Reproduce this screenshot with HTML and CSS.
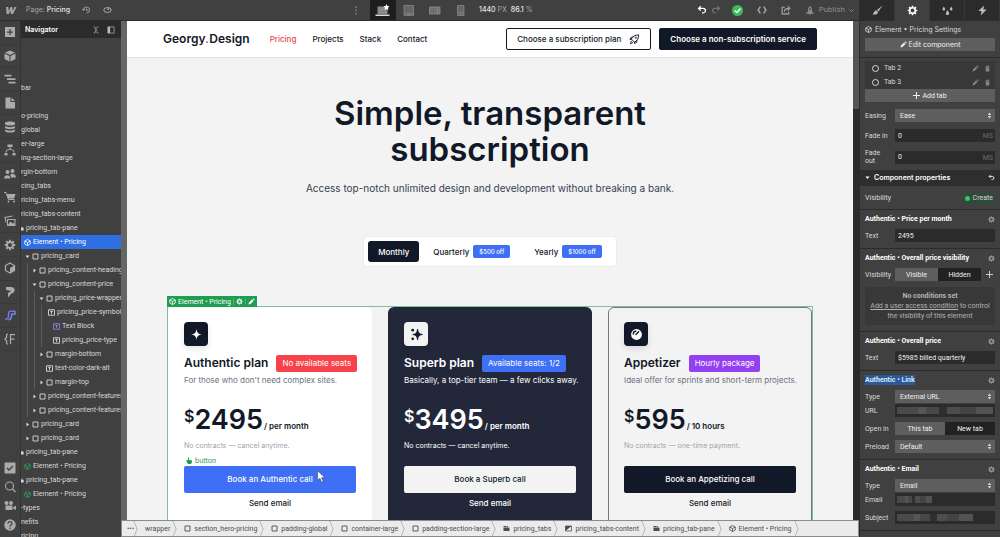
FILE: index.html
```html
<!DOCTYPE html>
<html lang="en">
<head>
    <meta charset="UTF-8">
    <meta name="viewport" content="width=device-width, initial-scale=1.0">
    <title>Page: Pricing</title>
    <link rel="stylesheet" href="styles.css">
</head>
<body>

<!-- Shared icons -->
<svg class="sprite" aria-hidden="true">
    <symbol id="i-box" viewBox="0 0 14 14"><path d="M2 2h10v10H2z" fill="none" stroke="currentColor" stroke-width="1.8"/></symbol>
    <symbol id="i-text" viewBox="0 0 14 14"><path d="M1 1.5h12v11H1zM4 4.5h6M7 4.5v6" fill="none" stroke="currentColor" stroke-width="1.8"/></symbol>
    <symbol id="i-cube" viewBox="0 0 14 14"><path d="M7 1l5.500 3v6L7 13l-5.500-3V4zM1.500 4L7 7l5.500-3M7 7v6" fill="none" stroke="currentColor" stroke-width="1.600" stroke-linejoin="round"/></symbol>
    <symbol id="i-pane" viewBox="0 0 14 14"><path d="M1 2h5v2H1zM7 2h3v2H7zM1 5h12v7H1z" fill="currentColor"/></symbol>
    <symbol id="i-right" viewBox="0 0 10 10"><path d="M3 1l5 4-5 4z" fill="currentColor"/></symbol>
    <symbol id="i-down" viewBox="0 0 10 10"><path d="M1 3l4 5 4-5z" fill="currentColor"/></symbol>
    <symbol id="i-gear" viewBox="0 0 16 16"><path d="M8 1v3M8 12v3M1 8h3M12 8h3M3 3l2.200 2.200M10.800 10.800L13 13M13 3l-2.200 2.200M5.200 10.800L3 13" stroke="currentColor" stroke-width="2.400"/><circle cx="8" cy="8" r="4" fill="none" stroke="currentColor" stroke-width="2.400"/></symbol>
    <symbol id="i-pencil" viewBox="0 0 14 14"><path d="M1 13l1-4 6-6 3 3-6 6zM9 2l1.500-1.500 3 3L12 5z" fill="currentColor"/></symbol>
    <symbol id="i-trash" viewBox="0 0 14 14"><path d="M3 2h8v1.500H3zM3.500 4.500h7V13h-7zM5.500 1h3v1h-3z" fill="currentColor"/></symbol>
    <symbol id="i-sort" viewBox="0 0 8 12"><path d="M4 1l3 4H1zM4 11l3-4H1z" fill="currentColor"/></symbol>
    <symbol id="i-undo" viewBox="0 0 16 16"><path d="M6 2L2.500 5.500 6 9M3 5.500h7a3.500 3.500 0 013.500 3.500v0A3.500 3.500 0 0110 12.500H8" fill="none" stroke="currentColor" stroke-width="2"/></symbol>
</svg>

<div class="app">
    <div class="workspace">
        <header class="topbar">
            <svg class="brand" viewBox="0 0 24 16"><path d="M2 1h4.500l1 8L11 1h3.500l1 8L19 1h4l-7 14h-4.200L11 8l-3.500 7H3.300z" fill="currentColor"/></svg>
            <div class="page-name">Page: <b>Pricing</b></div>
            <button class="bar-btn" aria-label="History"><svg viewBox="0 0 18 16"><path d="M3 8a6 6 0 116 6M0.500 6L3 9l3-3M9 5v3.500h3" fill="none" stroke="currentColor" stroke-width="1.800"/></svg></button>
            <button class="bar-btn" aria-label="Preview"><svg viewBox="0 0 18 16"><ellipse cx="9" cy="8" rx="7.500" ry="5" fill="none" stroke="currentColor" stroke-width="2"/><path d="M9 4a4 4 0 014 4H9z" fill="currentColor"/></svg></button>
            <div class="devices">
                <button class="more" aria-label="More"><svg viewBox="0 0 4 18"><path d="M1 1h2v3H1zM1 7.500h2v3H1zM1 14h2v3H1z" fill="currentColor"/></svg></button>
                <button class="device active" aria-label="Desktop"><svg viewBox="0 0 30 26"><path d="M5 5h20v15H5z" fill="#8a8a8a"/><path d="M1 21h28v3H1z" fill="#ddd"/><path d="M23 0l1.800 4 4.200.5-3 3 .7 4.300-3.700-2-3.700 2 .7-4.300-3-3 4.200-.5z" fill="#fff"/></svg></button>
                <button class="device" aria-label="Tablet"><svg viewBox="0 0 30 26"><path d="M6 3h19v20H6z" fill="#666"/><path d="M6 3h19v20H6zM6 19h19M13 21h5" fill="none" stroke="#8a8a8a" stroke-width="1.500"/></svg></button>
                <button class="device" aria-label="Mobile landscape"><svg viewBox="0 0 30 26"><path d="M5 6h21v14H5z" fill="#6e6e6e"/><path d="M5 6h21v14H5zM21 6v14" fill="none" stroke="#929292" stroke-width="1.500"/></svg></button>
                <button class="device" aria-label="Mobile portrait"><svg viewBox="0 0 30 26"><path d="M9 3h13v20H9z" fill="#666"/><path d="M9 3h13v20H9zM9 18h13M14 21h3" fill="none" stroke="#8a8a8a" stroke-width="1.500"/></svg></button>
                <div class="zoom"><b>1440</b> PX &nbsp;<b>86.1</b> %</div>
            </div>
            <div class="actions">
                <button class="bright" aria-label="Undo"><svg viewBox="0 0 16 16"><use href="#i-undo"/></svg></button>
                <button class="redo" aria-label="Redo"><svg viewBox="0 0 16 16"><use href="#i-undo"/></svg></button>
                <button class="saved" aria-label="Saved"><svg viewBox="0 0 16 16"><circle cx="8" cy="8" r="8" fill="#3cba5b"/><path d="M4 8l3 3 5.500-6" fill="none" stroke="#fff" stroke-width="2"/></svg></button>
                <button aria-label="Export code"><svg viewBox="0 0 18 16"><path d="M6 2L2 8l4 6M12 2l4 6-4 6" fill="none" stroke="currentColor" stroke-width="2.600"/></svg></button>
                <button aria-label="Share"><svg viewBox="0 0 18 16"><path d="M7 3H2v12h12v-4M6 11c0-4 3-6 8-6M12 1l4 4-4 4" fill="none" stroke="currentColor" stroke-width="2"/></svg></button>
                <button class="publish"><svg viewBox="0 0 16 16"><path d="M8 1l3 4v5l4 4H1l4-4V5zM6.500 12h3v3h-3z" fill="currentColor"/><circle cx="8" cy="6.500" r="1.500" fill="#404040"/></svg>Publish <svg class="chevron" viewBox="0 0 10 10"><path d="M1 3l4 4 4-4" fill="none" stroke="currentColor" stroke-width="1.800"/></svg></button>
            </div>
        </header>

        <div class="main">
            <!-- Tool rail -->
            <aside class="rail">
                <div class="rail-top">
                    <button aria-label="Add"><svg viewBox="0 0 24 24"><path d="M2 2h20v20H2z" fill="currentColor"/><path d="M12 6v12M6 12h12" stroke="#404040" stroke-width="2.500"/></svg></button>
                    <button aria-label="Components"><svg viewBox="0 0 24 24"><path d="M12 1l10 4-10 5L2 5zM1 7l10 5v11L1 18zM23 7l-10 5v11l10-5z" fill="currentColor"/></svg></button>
                    <button aria-label="Navigator"><svg viewBox="0 0 24 24"><path d="M1 5h14M6 12h17M9 19h14" stroke="currentColor" stroke-width="3.500"/></svg></button>
                    <button aria-label="Pages"><svg viewBox="0 0 24 24"><path d="M3 1h10v9h9v13H3zM15 1l7 7h-7z" fill="currentColor"/></svg></button>
                    <button aria-label="CMS"><svg viewBox="0 0 24 24"><path d="M2 4c0-4 20-4 20 0v2c0 4-20 4-20 0zM2 10c3 3 17 3 20 0v4c-2 3-18 3-20 0zM2 17c3 3 17 3 20 0v3c-2 4-18 4-20 0z" fill="currentColor"/></svg></button>
                    <button aria-label="Logic"><svg viewBox="0 0 24 24"><path d="M7 1h10v5H7zM1 18h6v5H1zM17 18h6v5h-6z" fill="currentColor"/><path d="M12 6v5M4 17c0-5 3-6 8-6s8 1 8 6" fill="none" stroke="currentColor" stroke-width="2"/></svg></button>
                    <button aria-label="Users"><svg viewBox="0 0 24 24"><circle cx="7" cy="8" r="4" fill="currentColor"/><circle cx="17" cy="6" r="4" fill="currentColor"/><path d="M0 21c0-9 13-9 13 0zM14 19c0-3-1-4-2-5 4-5 12-2 12 5z" fill="currentColor"/></svg></button>
                    <button aria-label="Ecommerce"><svg viewBox="0 0 24 24"><path d="M5 6h18l-3 9H8z" fill="currentColor"/><path d="M0 3h4l5 14h12" fill="none" stroke="currentColor" stroke-width="2"/><circle cx="9" cy="21" r="2" fill="currentColor"/><circle cx="20" cy="21" r="2" fill="currentColor"/></svg></button>
                    <button aria-label="Assets"><svg viewBox="0 0 24 24"><path d="M7 9h15v12H7zM4 15L2 5l15-3" fill="none" stroke="currentColor" stroke-width="2.200"/><path d="M8 20l5-7 4 4 2-2 3 5z" fill="currentColor"/></svg></button>
                    <button aria-label="Settings"><svg viewBox="0 0 16 16"><use href="#i-gear"/></svg></button>
                    <button aria-label="Library"><svg viewBox="0 0 24 24"><path d="M12 2l9 5v10l-9 5-9-5V7z" fill="none" stroke="currentColor" stroke-width="2.500"/><path d="M12 12l9-5v10l-9 5z" fill="currentColor"/></svg></button>
                    <button aria-label="Pattern app"><svg viewBox="0 0 24 24"><path d="M4 2h11c9 1 8 12 0 13l-1 1-6 7v-9l7-4-11-2z" fill="currentColor"/></svg></button>
                    <button aria-label="Flow app"><svg viewBox="0 0 24 24"><path d="M2 20c6 1 7-2 7-7V9c0-4 2-5 5-5h8" fill="none" stroke="#9a6cf0" stroke-width="2.500"/><path d="M22 4v6h-7v4c0 4-2 7-6 8" fill="none" stroke="#5aa2f0" stroke-width="2.500"/></svg></button>
                    <button aria-label="Finsweet"><svg viewBox="0 0 24 24"><path d="M8 2C5 2 5 3 5 5v4l-3 3 3 3v4c0 2 0 3 3 3M13 22V3h9M13 12h8" fill="none" stroke="currentColor" stroke-width="2.500"/></svg></button>
                </div>
                <div class="rail-bottom">
                    <button aria-label="Audit"><svg viewBox="0 0 24 24"><path d="M1 1h22v22H1z" fill="currentColor"/><path d="M6 12l4 4 8-8" fill="none" stroke="#404040" stroke-width="3"/></svg></button>
                    <button aria-label="Search"><svg viewBox="0 0 24 24"><circle cx="11" cy="10" r="8" fill="none" stroke="currentColor" stroke-width="2.200"/><path d="M17 16l6 6" stroke="currentColor" stroke-width="2.500"/></svg></button>
                    <button aria-label="Videos"><svg viewBox="0 0 24 24"><circle cx="5" cy="6" r="4" fill="currentColor"/><circle cx="14" cy="6" r="4" fill="currentColor"/><path d="M3 11h14v9H3zM18 15l6-4v9l-6-3z" fill="currentColor"/></svg></button>
                    <button aria-label="Help"><svg viewBox="0 0 24 24"><circle cx="12" cy="12" r="11.500" fill="currentColor"/><path d="M8 9c0-5 8-5 8 0 0 3-4 3-4 6M12 17v3" fill="none" stroke="#404040" stroke-width="2.500"/></svg></button>
                </div>
            </aside>

            <!-- Navigator -->
            <section class="navigator">
                <div class="nav-head">
                    <h2>Navigator</h2>
                    <svg viewBox="0 0 14 18"><path d="M2 1l5 5 5-5M2 17l5-5 5 5M4 9h6" fill="none" stroke="currentColor" stroke-width="2"/></svg>
                    <svg viewBox="0 0 18 18"><path d="M2 2h14v14H2z" fill="none" stroke="currentColor" stroke-width="1.500"/><path d="M2 2h5v14H2z" fill="currentColor"/></svg>
                </div>
                <ul class="tree">
                    <li class="row cut">bar</li>
                    <li class="row cut"></li>
                    <li class="row cut">o-pricing</li>
                    <li class="row cut">global</li>
                    <li class="row cut">er-large</li>
                    <li class="row cut">ing-section-large</li>
                    <li class="row cut">rgin-bottom</li>
                    <li class="row cut">cing_tabs</li>
                    <li class="row cut">ricing_tabs-menu</li>
                    <li class="row cut">ricing_tabs-content</li>
                    <li class="row cut"><svg class="slim" viewBox="6 0 8 14"><use href="#i-pane" width="14" height="14"/></svg>pricing_tab-pane</li>
                    <li class="row selected"><svg><use href="#i-cube"/></svg>Element • Pricing</li>
                    <li>
                        <div class="row"><svg class="arrow"><use href="#i-down"/></svg><svg><use href="#i-box"/></svg>pricing_card</div>
                        <ul>
                            <li class="row"><svg class="arrow"><use href="#i-right"/></svg><svg><use href="#i-box"/></svg>pricing_content-heading</li>
                            <li>
                                <div class="row"><svg class="arrow"><use href="#i-down"/></svg><svg><use href="#i-box"/></svg>pricing_content-price</div>
                                <ul>
                                    <li>
                                        <div class="row"><svg class="arrow"><use href="#i-down"/></svg><svg><use href="#i-box"/></svg>pricing_price-wrapper</div>
                                        <ul>
                                            <li class="row"><span class="arrow"></span><svg><use href="#i-text"/></svg>pricing_price-symbol</li>
                                            <li class="row"><span class="arrow"></span><svg class="violet"><use href="#i-text"/></svg>Text Block</li>
                                            <li class="row"><span class="arrow"></span><svg><use href="#i-text"/></svg>pricing_price-type</li>
                                        </ul>
                                    </li>
                                    <li class="row"><svg class="arrow"><use href="#i-right"/></svg><svg><use href="#i-box"/></svg>margin-bottom</li>
                                    <li class="row"><span class="arrow"></span><svg><use href="#i-text"/></svg>text-color-dark-alt</li>
                                    <li class="row"><svg class="arrow"><use href="#i-right"/></svg><svg><use href="#i-box"/></svg>margin-top</li>
                                </ul>
                            </li>
                            <li class="row"><svg class="arrow"><use href="#i-right"/></svg><svg><use href="#i-box"/></svg>pricing_content-features</li>
                            <li class="row"><svg class="arrow"><use href="#i-right"/></svg><svg><use href="#i-box"/></svg>pricing_content-features</li>
                        </ul>
                    </li>
                    <li class="row"><svg class="arrow"><use href="#i-right"/></svg><svg><use href="#i-box"/></svg>pricing_card</li>
                    <li class="row"><svg class="arrow"><use href="#i-right"/></svg><svg><use href="#i-box"/></svg>pricing_card</li>
                    <li class="row cut"><svg class="slim" viewBox="6 0 8 14"><use href="#i-pane" width="14" height="14"/></svg>pricing_tab-pane</li>
                    <li class="row component"><svg><use href="#i-cube"/></svg>Element • Pricing</li>
                    <li class="row cut"><svg class="slim" viewBox="6 0 8 14"><use href="#i-pane" width="14" height="14"/></svg>pricing_tab-pane</li>
                    <li class="row component"><svg><use href="#i-cube"/></svg>Element • Pricing</li>
                    <li class="row cut">-types</li>
                    <li class="row cut">nefits</li>
                    <li class="row cut">ricing</li>
                </ul>
            </section>

            <div class="stage">
                <!-- Site canvas -->
                <div class="canvas">
                    <div class="site">
                        <header class="site-nav">
                            <a class="logo" href="#">Georgy<i>.</i>Design</a>
                            <nav>
                                <a class="current" href="#">Pricing</a>
                                <a href="#">Projects</a>
                                <a href="#">Stack</a>
                                <a href="#">Contact</a>
                            </nav>
                            <a class="site-btn outline" href="#">Choose a subscription plan
                                <svg viewBox="0 0 24 24"><path d="M9 15l-4-4c3-6 8-9 16-9 0 8-3 13-9 16zM9 7H5l-3 5 4-1M17 13v5l-5 3v-4M6 15c-2 1-2 4-3 6 2-1 5-1 6-3" fill="none" stroke="currentColor" stroke-width="2" stroke-linejoin="round"/><circle cx="15" cy="8" r="1.800" fill="none" stroke="currentColor" stroke-width="1.500"/></svg>
                            </a>
                            <a class="site-btn dark" href="#">Choose a non-subscription service</a>
                        </header>

                        <section class="hero">
                            <h1>Simple, transparent<br>subscription</h1>
                            <p>Access top-notch unlimited design and development without breaking a bank.</p>
                            <div class="period">
                                <button class="on">Monthly</button>
                                <button>Quarterly <span>$500 off</span></button>
                                <button>Yearly <span>$1000 off</span></button>
                            </div>
                        </section>

                        <section class="pricing">
                            <div class="element-tag">
                                <span><svg><use href="#i-cube"/></svg>Element • Pricing</span>
                                <button aria-label="Element settings"><svg viewBox="0 0 16 16"><use href="#i-gear"/></svg></button>
                                <button aria-label="Edit element"><svg><use href="#i-pencil"/></svg></button>
                            </div>

                            <article class="card light">
                                <div class="card-icon"><svg viewBox="0 0 24 24"><path d="M12 2c1 7 3 9 10 10-7 1-9 3-10 10-1-7-3-9-10-10 7-1 9-3 10-10z" fill="currentColor"/></svg></div>
                                <div class="card-title"><h3>Authentic plan</h3><span class="seats red">No available seats</span></div>
                                <p class="about">For those who don't need complex sites.</p>
                                <div class="price"><sup>$</sup><strong>2495</strong><span>/ per month</span></div>
                                <p class="terms">No contracts — cancel anytime.</p>
                                <div class="cta-wrap">
                                    <span class="button-tag"><svg viewBox="0 0 14 14"><path d="M4 1h2v5l6 1v3l-2 4H4L1 9V6h3z" fill="currentColor"/></svg>button</span>
                                    <a class="cta blue" href="#">Book an Authentic call</a>
                                    <svg class="cursor" viewBox="0 0 14 22"><path d="M1 1v17l4-4 3 7 3-1-3-7h6z" fill="#fff" stroke="#345" stroke-width="1"/></svg>
                                </div>
                                <a class="send" href="#">Send email</a>
                            </article>

                            <article class="card navy">
                                <div class="card-icon"><svg viewBox="0 0 24 24"><path d="M14 2c1 7 3 9 9 10-6 1-8 3-9 10-1-7-3-9-9-10 6-1 8-3 9-10z" fill="currentColor" stroke="currentColor" stroke-width="1.500" stroke-linejoin="round"/><circle cx="5" cy="4" r="2.500" fill="currentColor"/><circle cx="5" cy="20" r="2.500" fill="currentColor"/></svg></div>
                                <div class="card-title"><h3>Superb plan</h3><span class="seats azure">Available seats: 1/2</span></div>
                                <p class="about">Basically, a top-tier team — a few clicks away.</p>
                                <div class="price"><sup>$</sup><strong>3495</strong><span>/ per month</span></div>
                                <p class="terms">No contracts — cancel anytime.</p>
                                <div class="cta-wrap"><a class="cta pale" href="#">Book a Superb call</a></div>
                                <a class="send" href="#">Send email</a>
                            </article>

                            <article class="card outlined">
                                <div class="card-icon"><svg viewBox="0 0 24 24"><circle cx="12" cy="12" r="10" fill="currentColor"/><path d="M6 11c0-3 2-5 5-5M11 12l5-5" fill="none" stroke="#111827" stroke-width="2.500" stroke-linecap="round"/></svg></div>
                                <div class="card-title"><h3>Appetizer</h3><span class="seats purple">Hourly package</span></div>
                                <p class="about">Ideal offer for sprints and short-term projects.</p>
                                <div class="price"><sup>$</sup><strong>595</strong><span>/ 10 hours</span></div>
                                <p class="terms">No contracts — one-time payment.</p>
                                <div class="cta-wrap"><a class="cta ink" href="#">Book an Appetizing call</a></div>
                                <a class="send" href="#">Send email</a>
                            </article>
                        </section>
                    </div>
                    <div class="scrollbar"><i></i></div>
                </div>

                <nav class="crumbs">
                    <a class="dots" href="#">•••</a>
                    <a href="#">wrapper</a>
                    <a href="#"><svg><use href="#i-box"/></svg>section_hero-pricing</a>
                    <a href="#"><svg><use href="#i-box"/></svg>padding-global</a>
                    <a href="#"><svg><use href="#i-box"/></svg>container-large</a>
                    <a href="#"><svg><use href="#i-box"/></svg>padding-section-large</a>
                    <a href="#"><svg><use href="#i-pane"/></svg>pricing_tabs</a>
                    <a href="#"><svg viewBox="0 0 14 14"><path d="M1 2h12v10H1z" fill="none" stroke="currentColor" stroke-width="1.500"/><path d="M1 12V2h12z" fill="currentColor"/></svg>pricing_tabs-content</a>
                    <a href="#"><svg><use href="#i-pane"/></svg>pricing_tab-pane</a>
                    <a href="#"><svg><use href="#i-cube"/></svg>Element • Pricing</a>
                </nav>
            </div>
        </div>
    </div>

    <!-- Settings panel -->
    <aside class="panel">
        <div class="panel-tabs">
            <button aria-label="Style"><svg viewBox="0 0 24 24"><path d="M23 1L11 11l3 3zM10 12l3 3c-1 6-6 7-12 5 4-2 3-8 9-8z" fill="currentColor"/></svg></button>
            <button class="active" aria-label="Settings"><svg viewBox="0 0 16 16"><use href="#i-gear"/></svg></button>
            <button aria-label="Style manager"><svg viewBox="0 0 24 24"><path d="M4 3c4 6 4 9 0 9s-4-3 0-9zM20 3c4 6 4 9 0 9s-4-3 0-9zM12 11c5 7 4 11 0 11s-5-4 0-11z" fill="currentColor"/></svg></button>
            <button aria-label="Interactions"><svg viewBox="0 0 24 24"><path d="M15 1L3 13h7l-2 10 13-13h-7z" fill="currentColor"/></svg></button>
        </div>
        <div class="panel-title"><svg><use href="#i-cube"/></svg>Element • Pricing Settings</div>
        <button class="wide-btn"><svg><use href="#i-pencil"/></svg>Edit component</button>

        <div class="group tabs-group">
            <div class="tab-item"><i></i><span>Tab 2</span><svg><use href="#i-pencil"/></svg><svg><use href="#i-trash"/></svg></div>
            <div class="tab-item"><i></i><span>Tab 3</span><svg><use href="#i-pencil"/></svg><svg><use href="#i-trash"/></svg></div>
            <button class="wide-btn add"><svg viewBox="0 0 14 14"><path d="M7 0v14M0 7h14" stroke="currentColor" stroke-width="2"/></svg>Add tab</button>
            <div class="field"><label for="easing">Easing</label><div class="select"><select id="easing"><option>Ease</option></select><svg><use href="#i-sort"/></svg></div></div>
            <div class="field"><label for="fade-in">Fade in</label><div class="unit"><input id="fade-in" type="text" value="0"><span>MS</span></div></div>
            <div class="field"><label for="fade-out">Fade<br>out</label><div class="unit"><input id="fade-out" type="text" value="0"><span>MS</span></div></div>
        </div>

        <div class="panel-head"><svg><use href="#i-down"/></svg><h2>Component properties</h2><svg class="reset" viewBox="0 0 16 16"><use href="#i-undo"/></svg></div>

        <div class="group visibility"><span>Visibility</span><button><i></i>Create</button></div>

        <div class="group">
            <h3>Authentic • Price per month<svg viewBox="0 0 16 16"><use href="#i-gear"/></svg></h3>
            <div class="field"><label for="month">Text</label><input id="month" type="text" value="2495"></div>
        </div>

        <div class="group">
            <h3>Authentic • Overall price visibility<svg viewBox="0 0 16 16"><use href="#i-gear"/></svg></h3>
            <div class="field short"><span class="label">Visibility</span><div class="toggle"><button class="on">Visible</button><button>Hidden</button></div><button class="plus" aria-label="Add condition"><svg viewBox="0 0 14 14"><path d="M7 0v14M0 7h14" stroke="currentColor" stroke-width="1.800"/></svg></button></div>
            <p class="conditions"><b>No conditions set</b><br><a href="#">Add a user access condition</a> to control the visibility of this element</p>
        </div>

        <div class="group">
            <h3>Authentic • Overall price<svg viewBox="0 0 16 16"><use href="#i-gear"/></svg></h3>
            <div class="field"><label for="overall">Text</label><input id="overall" type="text" value="$5985 billed quarterly"></div>
        </div>

        <div class="group">
            <h3><mark>Authentic • Link</mark><svg viewBox="0 0 16 16"><use href="#i-gear"/></svg></h3>
            <div class="field joined"><label for="link-type">Type</label><div class="select"><select id="link-type"><option>External URL</option></select><svg><use href="#i-sort"/></svg></div></div>
            <div class="field"><label for="url">URL</label><input class="hidden-value full" id="url" type="text"></div>
            <div class="field"><span class="label">Open in</span><div class="toggle"><button class="on">This tab</button><button>New tab</button></div></div>
            <div class="field"><label for="preload">Preload</label><div class="select"><select id="preload"><option>Default</option></select><svg><use href="#i-sort"/></svg></div></div>
        </div>

        <div class="group">
            <h3>Authentic • Email<svg viewBox="0 0 16 16"><use href="#i-gear"/></svg></h3>
            <div class="field joined"><label for="mail-type">Type</label><div class="select"><select id="mail-type"><option>Email</option></select><svg><use href="#i-sort"/></svg></div></div>
            <div class="field"><label for="email">Email</label><input class="hidden-value third" id="email" type="text"></div>
            <div class="field"><label for="subject">Subject</label><input class="hidden-value most" id="subject" type="text"></div>
        </div>
        <div class="group"></div>
    </aside>
</div>

</body>
</html>
```
FILE: styles.css
```css
/* General Reset */
* {
    margin: 0;
    padding: 0;
    box-sizing: border-box;
}
body {
    font-family: Inter, "Liberation Sans", sans-serif;
    font-size: 7px;
    line-height: 10px;
    color: #d9d9d9;
    background: #404040;
    overflow: hidden;
}
button, input, select {
    font: inherit;
    color: inherit;
    border: none;
    background: none;
}
a {
    color: inherit;
    text-decoration: none;
}
ul {
    list-style: none;
}
svg {
    display: block;
    flex: none;
    width: 7px;
    height: 7px;
}
.sprite {
    position: absolute;
    width: 0;
    height: 0;
}

.app {
    display: flex;
    height: 100vh;
}
.workspace {
    flex: 1;
    min-width: 0;
    display: flex;
    flex-direction: column;
}

/* Narrower face for dense lists */
.tree, .crumbs, .element-tag, .group, .publish {
    font-family: Roboto, "Liberation Sans", sans-serif;
}

/* Top Bar */
.topbar {
    height: 21px;
    display: flex;
    align-items: center;
    border-bottom: 1px solid #2b2b2b;
    color: #a6a6a6;
}
.topbar b {
    font-weight: 500;
    color: #e6e6e6;
}
.brand {
    width: 12px;
    height: 9px;
    margin: 0 9px 0 5px;
}
.page-name {
    width: 50px;
    white-space: nowrap;
}
.bar-btn {
    width: 21px;
    display: flex;
    justify-content: center;
}
.bar-btn svg {
    width: 9px;
    height: 8px;
}
.devices {
    flex: 1;
    height: 100%;
    display: flex;
    align-items: center;
    justify-content: center;
    padding-left: 60px;
}
.more {
    width: 28px;
    display: flex;
    justify-content: center;
}
.more svg {
    width: 2px;
    height: 9px;
}
.device {
    width: 26px;
    height: 100%;
    display: flex;
    align-items: center;
    justify-content: center;
}
.device svg {
    width: 15px;
    height: 13px;
}
.device.active {
    background: #1e1e1e;
}
.zoom {
    margin-left: 5px;
    white-space: nowrap;
}
.actions {
    display: flex;
    align-items: center;
    gap: 14px;
    padding-right: 5px;
}
.actions svg {
    width: 10px;
    height: 10px;
}
.actions .bright {
    color: #fff;
    margin-right: -10px;
}
.actions .redo {
    color: #737373;
    margin-right: -3px;
    transform: scaleX(-1);
}
.actions .saved svg {
    width: 11px;
    height: 11px;
}
.publish {
    display: flex;
    align-items: center;
    gap: 4px;
    font-size: 8px;
    color: #8c8c8c;
}
.actions .chevron {
    width: 5px;
    height: 5px;
}

.main {
    flex: 1;
    min-height: 0;
    display: flex;
}

/* Tool Rail */
.rail {
    width: 20px;
    display: flex;
    flex-direction: column;
    justify-content: space-between;
    color: #ababab;
}
.rail button {
    width: 100%;
    display: flex;
    align-items: center;
    justify-content: center;
}
.rail svg {
    width: 12px;
    height: 12px;
}
.rail-top {
    flex: 0 0 64%;
    display: flex;
    flex-direction: column;
}
.rail-top button {
    flex: 1;
    border-bottom: 1px solid #393939;
}
.rail-bottom {
    padding-bottom: 3px;
}
.rail-bottom button {
    height: 19px;
}

/* Navigator */
.navigator {
    width: 101px;
    overflow: hidden;
    white-space: nowrap;
    border-left: 1px solid #333;
}
.nav-head {
    height: 17px;
    display: flex;
    align-items: center;
    gap: 7px;
    padding: 0 6px 0 4px;
    background: #2b2b2b;
    color: #bdbdbd;
}
.nav-head h2 {
    flex: 1;
    font-size: 7px;
    font-weight: 600;
    color: #fff;
}
.nav-head svg {
    width: 8px;
    height: 8px;
}
.tree {
    padding-top: 43px;
}
.tree ul {
    margin-left: 6px;
    border-left: 1px solid #5c5c5c;
}
.row {
    height: 14px;
    display: flex;
    align-items: center;
    gap: 2px;
    padding-left: 4px;
}
.row .arrow {
    width: 5px;
    height: 5px;
}
.row.cut {
    padding-left: 0;
}
.row .slim {
    width: 3px;
}
.row.selected {
    background: #2e6fe3;
    color: #fff;
}
.row.selected, .row.component {
    padding-left: 3px;
}
.component svg {
    color: #27a55c;
}
.violet {
    color: #9a7be0;
}

/* Stage */
.stage {
    flex: 1;
    min-width: 0;
    display: flex;
    flex-direction: column;
}
.canvas {
    flex: 1;
    min-height: 0;
    display: flex;
    border-left: 6px solid #666;
}
.scrollbar {
    width: 6px;
    background: #2b2b2b;
}
.scrollbar i {
    display: block;
    height: 88px;
    background: #555;
}
.site {
    flex: 1;
    overflow: hidden;
    background: #f3f3f3;
    color: #111827;
    font-size: 8px;
    line-height: 12px;
}
.site-nav {
    height: 37px;
    display: flex;
    align-items: center;
    padding: 0 36px;
    background: #fff;
    border-bottom: 1px solid #e2e2e2;
}
.logo {
    font-size: 12px;
    font-weight: 600;
    margin-right: 20px;
}
.logo i {
    color: #fb4550;
}
.site-nav nav {
    flex: 1;
    display: flex;
    gap: 16px;
    font-weight: 500;
}
.site-nav .current {
    color: #e5484d;
}
.site-btn {
    height: 22px;
    display: flex;
    align-items: center;
    gap: 8px;
    padding: 0 10px;
    border: 1px solid #111827;
    border-radius: 2px;
    font-weight: 500;
}
.site-btn svg {
    width: 11px;
    height: 11px;
}
.site-btn.dark {
    margin-left: 8px;
    background: #111827;
    color: #fff;
    font-weight: 600;
}

/* Hero */
.hero {
    display: flex;
    flex-direction: column;
    align-items: center;
    padding: 37px 0 39px;
    text-align: center;
}
.hero h1 {
    font-size: 33px;
    line-height: 36px;
    font-weight: 600;
}
.hero p {
    margin: 14px 0 41px;
    font-size: 10px;
    line-height: 14px;
    color: #374151;
}
.period {
    display: flex;
    gap: 4px;
    padding: 4px;
    background: #fff;
    border: 1px solid #ebebeb;
    border-radius: 4px;
}
.period button {
    height: 21px;
    display: flex;
    align-items: center;
    gap: 4px;
    padding: 0 10px;
    border-radius: 3px;
    font-weight: 500;
}
.period .on {
    background: #111827;
    color: #fff;
}
.period span {
    padding: 0 6px;
    border-radius: 2px;
    background: #3e6ff4;
    color: #fff;
    font-size: 6px;
    line-height: 13px;
}

/* Pricing Cards */
.pricing {
    position: relative;
    display: grid;
    grid-template-columns: repeat(3, minmax(0, 1fr));
    gap: 16px;
    margin: 0 40px;
    height: 260px;
    border: 1px solid #7fbf9b;
}
.element-tag {
    position: absolute;
    left: -1px;
    bottom: 100%;
    display: flex;
    align-items: center;
    gap: 2px;
    height: 11px;
    padding: 0 2px;
    background: #1f9d50;
    color: #fff;
    font-size: 7px;
    white-space: nowrap;
}
.element-tag span {
    display: flex;
    align-items: center;
    gap: 2px;
}
.element-tag button {
    padding-left: 2px;
    border-left: 1px solid #4bb373;
}
.card {
    padding: 15px 16px;
    border-radius: 6px;
}
.card.light {
    background: #fff;
}
.card.navy {
    background: #22283a;
    color: #fff;
}
.card.outlined {
    padding: 14px 15px;
    border: 1px solid #6e7a80;
}
.card-icon {
    width: 24px;
    height: 24px;
    display: flex;
    align-items: center;
    justify-content: center;
    border-radius: 4px;
    background: #111827;
    color: #fff;
    box-shadow: 0 3px 6px rgba(0, 0, 0, 0.1);
}
.navy .card-icon {
    background: #f3f3f3;
    color: #111827;
}
.card-icon svg {
    width: 13px;
    height: 13px;
}
.card-title {
    display: flex;
    align-items: center;
    gap: 8px;
    margin: 8px 0 2px;
    white-space: nowrap;
}
.card-title h3 {
    font-size: 12px;
    line-height: 18px;
    font-weight: 600;
}
.seats {
    padding: 0 6px;
    border-radius: 2px;
    color: #fff;
    font-size: 8px;
    line-height: 17px;
}
.red {
    background: #f8434b;
}
.azure {
    background: #3e6ff4;
}
.purple {
    background: #9340f2;
}
.about {
    font-size: 8px;
    color: #6b7280;
    white-space: nowrap;
}
.navy p {
    color: #fff;
}
.price {
    display: flex;
    align-items: baseline;
    margin-top: 19px;
    line-height: 30px;
}
.price sup {
    align-self: flex-start;
    font-size: 16px;
    line-height: 22px;
    font-weight: 600;
}
.price strong {
    font-size: 27px;
    font-weight: 600;
}
.price span {
    margin-left: 1px;
    font-size: 8px;
    font-weight: 600;
}
.terms {
    margin-bottom: 15px;
    font-size: 7px;
    line-height: 10px;
    color: #9ca3af;
}
.cta-wrap {
    position: relative;
}
.cta {
    display: block;
    border-radius: 2px;
    font-weight: 500;
    line-height: 27px;
    text-align: center;
}
.blue {
    background: #3e6ff4;
    color: #fff;
}
.pale {
    background: #f3f3f3;
    color: #111827;
}
.ink {
    background: #111827;
    color: #fff;
}
.button-tag {
    position: absolute;
    left: 2px;
    bottom: 100%;
    display: flex;
    align-items: center;
    gap: 2px;
    font-size: 7px;
    line-height: 11px;
    color: #1f9d50;
}
.cursor {
    position: absolute;
    left: 133px;
    top: 4px;
    width: 8px;
    height: 13px;
}
.send {
    display: block;
    margin-top: 4px;
    font-size: 8px;
    font-weight: 500;
    text-align: center;
}

/* Breadcrumbs */
.crumbs {
    height: 17px;
    display: flex;
    align-items: center;
    border: 1px solid #8c8c8c;
    background: #ebebeb;
    color: #4d4d4d;
    overflow: hidden;
    white-space: nowrap;
}
.crumbs a {
    position: relative;
    display: flex;
    align-items: center;
    gap: 3px;
    padding: 0 11px 0 3px;
}
.crumbs a::after {
    content: "";
    position: absolute;
    right: 2px;
    width: 11px;
    height: 11px;
    border: solid #999;
    border-width: 1px 1px 0 0;
    transform: scaleX(0.4) rotate(45deg);
}
.crumbs .dots {
    padding: 0 8px 0 5px;
}

/* Settings Panel */
.panel {
    width: 141px;
    overflow: hidden;
    border-left: 1px solid #2b2b2b;
    background: #404040;
}
.panel-tabs {
    height: 21px;
    display: flex;
    background: #2b2b2b;
}
.panel-tabs button {
    flex: 1;
    display: flex;
    align-items: center;
    justify-content: center;
    border-right: 1px solid #383838;
    color: #bdbdbd;
}
.panel-tabs .active {
    background: #404040;
    color: #fff;
}
.panel-tabs svg {
    width: 11px;
    height: 11px;
}
.panel-title {
    display: flex;
    align-items: center;
    gap: 3px;
    height: 17px;
    padding-left: 5px;
}
.wide-btn {
    width: calc(100% - 10px);
    height: 13px;
    margin-left: 5px;
    display: flex;
    align-items: center;
    justify-content: center;
    gap: 2px;
    background: #5e5e5e;
    color: #f0f0f0;
}
.group {
    padding: 4px 5px 6px;
    border-top: 1px solid #2b2b2b;
}
.tabs-group {
    margin-top: 6px;
    padding: 3px 5px 5px;
}
.tab-item {
    height: 14px;
    display: flex;
    align-items: center;
    gap: 5px;
    padding: 0 4px 0 7px;
    background: #383838;
}
.tab-item span {
    flex: 1;
}
.tab-item svg {
    color: #858585;
}
.tab-item i {
    width: 7px;
    height: 7px;
    border: 1px solid #d9d9d9;
    border-radius: 50%;
}
.wide-btn.add {
    width: 100%;
    margin-left: 0;
}
.field {
    display: grid;
    grid-template-columns: 30px 1fr;
    align-items: center;
    margin-top: 5px;
    line-height: 8px;
}
.field input, .field select {
    display: block;
    width: 100%;
    height: 13px;
    padding: 0 3px;
    background: #2b2b2b;
    color: #f0f0f0;
}
.field select {
    appearance: none;
    background: #5e5e5e;
    padding-left: 5px;
}
.tabs-group .field {
    margin-top: 7px;
}
.select, .unit {
    position: relative;
}
.select svg {
    position: absolute;
    right: 3px;
    top: 3px;
    width: 5px;
}
.unit span {
    position: absolute;
    right: 2px;
    top: 3px;
    color: #6b6b6b;
}
.panel-head {
    height: 15px;
    display: flex;
    align-items: center;
    gap: 4px;
    padding: 0 5px;
    background: #2e2e2e;
    color: #fff;
}
.panel-head h2 {
    flex: 1;
    font-size: 7px;
    font-weight: 600;
}
.panel-head svg {
    width: 5px;
    height: 5px;
}
.panel-head .reset {
    width: 7px;
    height: 7px;
}
.visibility {
    display: flex;
    align-items: center;
    justify-content: space-between;
    padding: 6px 5px 5px;
}
.visibility button {
    display: flex;
    align-items: center;
    gap: 3px;
    padding: 1px 2px;
    background: #31493a;
}
.visibility i {
    width: 5px;
    height: 5px;
    border-radius: 50%;
    background: #2fc968;
}
.group h3 {
    display: flex;
    align-items: center;
    justify-content: space-between;
    font-size: 7px;
    font-weight: 700;
    color: #fff;
}
.group h3 svg {
    color: #a6a6a6;
}
mark {
    background: #2c5a96;
    color: #d6e6ff;
}
.field.short {
    grid-template-columns: 30px 1fr 14px;
}
.toggle {
    display: flex;
    background: #222;
}
.toggle button {
    flex: 1;
    height: 13px;
    color: #f0f0f0;
}
.toggle .on {
    background: #5e5e5e;
}
.plus {
    display: flex;
    justify-content: flex-end;
    padding-right: 2px;
}
.conditions {
    margin-top: 6px;
    padding: 4px;
    background: #383838;
    text-align: center;
    color: #b3b3b3;
}
.conditions a {
    text-decoration: underline;
}
.field.joined {
    margin-bottom: -4px;
}

/* Masked values */
.field .hidden-value {
    background: linear-gradient(90deg, #4a4a4a 22%, #555 22% 30%, #484848 30% 44%, #2f2f2f 44% 52%, #4d4d4d 52% 66%, #444 66% 82%, #525252 82%) no-repeat 2px 3px #2b2b2b;
}
.field .full {
    background-size: 96% 7px;
}
.field .third {
    background-size: 35% 7px;
}
.field .most {
    background-size: 76% 7px;
}
```
